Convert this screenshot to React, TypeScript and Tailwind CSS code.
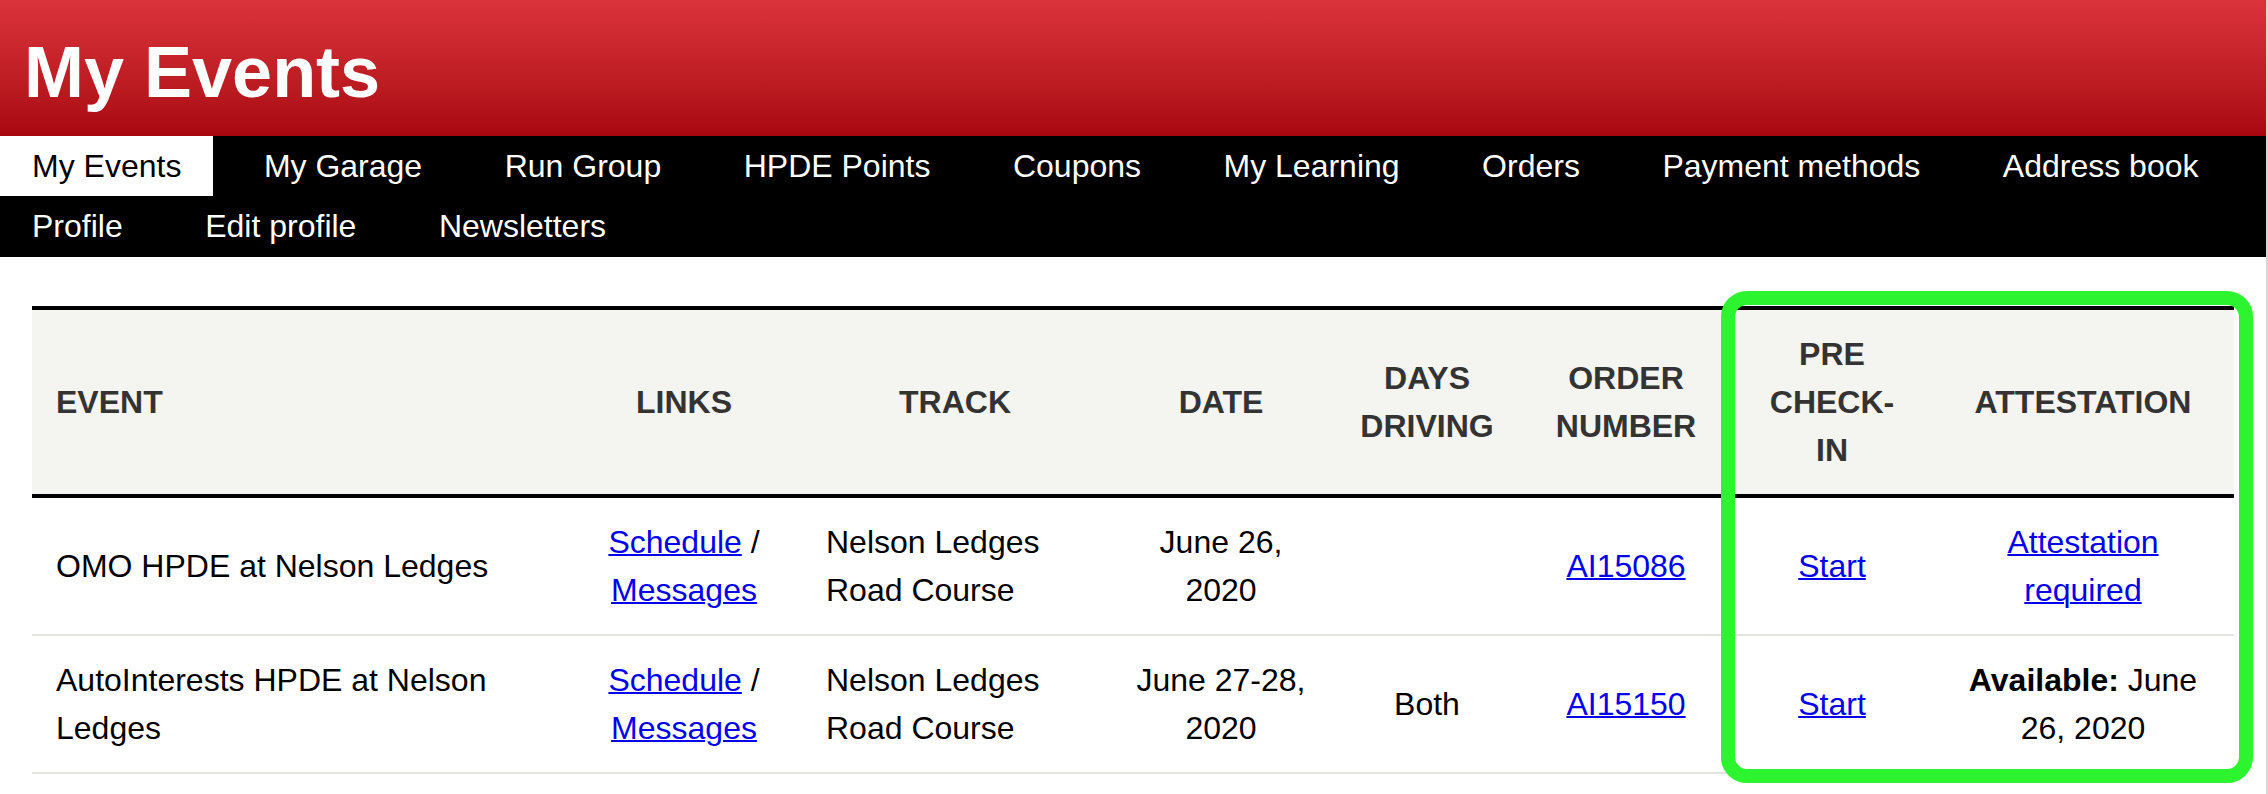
import React from 'react';

const tabs = [
  'My Events',
  'My Garage',
  'Run Group',
  'HPDE Points',
  'Coupons',
  'My Learning',
  'Orders',
  'Payment methods',
  'Address book',
  'Profile',
  'Edit profile',
  'Newsletters',
];

const A = ({ children }: { children: React.ReactNode }) => (
  <a href="#" className="text-[#0000ee] underline decoration-[2px]">
    {children}
  </a>
);

const rows = [
  {
    event: 'OMO HPDE at Nelson Ledges',
    date: 'June 26, 2020',
    days: '',
    order: 'AI15086',
    attestation: <A>Attestation required</A>,
  },
  {
    event: 'AutoInterests HPDE at Nelson Ledges',
    date: 'June 27-28, 2020',
    days: 'Both',
    order: 'AI15150',
    attestation: (
      <>
        <b>Available:</b> June 26, 2020
      </>
    ),
  },
];

export default function App() {
  return (
    <div className="relative min-h-screen bg-white border-r-2 border-[#d6d6d6] font-['Liberation_Sans',Arial,sans-serif]">
      <header className="h-[136px] pt-[36px] pl-6 bg-gradient-to-b from-[#dc333b] to-[#a8060f]">
        <h1 className="text-[72px] leading-none font-bold text-white">My Events</h1>
      </header>

      <nav className="bg-black pb-[1px]">
        <ul className="flex flex-wrap gap-x-[18.5px]">
          {tabs.map((t, i) => (
            <li
              key={t}
              className={
                i === 0
                  ? 'h-[60px] px-8 flex items-center text-[32px] bg-white text-black'
                  : 'h-[60px] px-8 flex items-center text-[32px] text-white'
              }
            >
              {t}
            </li>
          ))}
        </ul>
      </nav>

      <main className="px-8 pt-[49px]">
        <table className="w-full table-fixed border-separate border-spacing-0 text-[32px] leading-[48px] text-black">
          <colgroup>
            <col className="w-[534px]" />
            <col className="w-[236px]" />
            <col className="w-[306px]" />
            <col className="w-[226px]" />
            <col className="w-[186px]" />
            <col className="w-[212px]" />
            <col className="w-[200px]" />
            <col />
          </colgroup>
          <thead>
            <tr className="bg-[#f4f4f0] text-[#333333] uppercase font-bold">
              <th className="border-y-4 border-black px-6 py-5 text-left align-middle">Event</th>
              <th className="border-y-4 border-black px-6 py-5 text-center align-middle">Links</th>
              <th className="border-y-4 border-black px-6 py-5 text-center align-middle">Track</th>
              <th className="border-y-4 border-black px-6 py-5 text-center align-middle">Date</th>
              <th className="border-y-4 border-black px-6 py-5 text-center align-middle">Days Driving</th>
              <th className="border-y-4 border-black px-6 py-5 text-center align-middle">Order Number</th>
              <th className="border-y-4 border-black px-6 py-5 text-center align-middle">Pre Check-in</th>
              <th className="border-y-4 border-black px-6 py-5 text-center align-middle">Attestation</th>
            </tr>
          </thead>
          <tbody>
            {rows.map((r) => (
              <tr key={r.order}>
                <td className="border-b-2 border-[#e2e2de] px-6 py-5 text-left align-middle">{r.event}</td>
                <td className="border-b-2 border-[#e2e2de] px-6 py-5 text-center align-middle">
                  <A>Schedule</A> / <A>Messages</A>
                </td>
                <td className="border-b-2 border-[#e2e2de] px-6 py-5 text-left align-middle">
                  Nelson Ledges Road Course
                </td>
                <td className="border-b-2 border-[#e2e2de] px-6 py-5 text-center align-middle">{r.date}</td>
                <td className="border-b-2 border-[#e2e2de] px-6 py-5 text-center align-middle">{r.days}</td>
                <td className="border-b-2 border-[#e2e2de] px-6 py-5 text-center align-middle">
                  <A>{r.order}</A>
                </td>
                <td className="border-b-2 border-[#e2e2de] px-6 py-5 text-center align-middle">
                  <A>Start</A>
                </td>
                <td className="border-b-2 border-[#e2e2de] px-6 py-5 text-center align-middle">{r.attestation}</td>
              </tr>
            ))}
          </tbody>
        </table>
      </main>

      {/* highlight annotation */}
      <div className="absolute left-[1721px] top-[291px] w-[532px] h-[492px] rounded-[26px] border-[14px] border-[#2cf52f] pointer-events-none" />
    </div>
  );
}
